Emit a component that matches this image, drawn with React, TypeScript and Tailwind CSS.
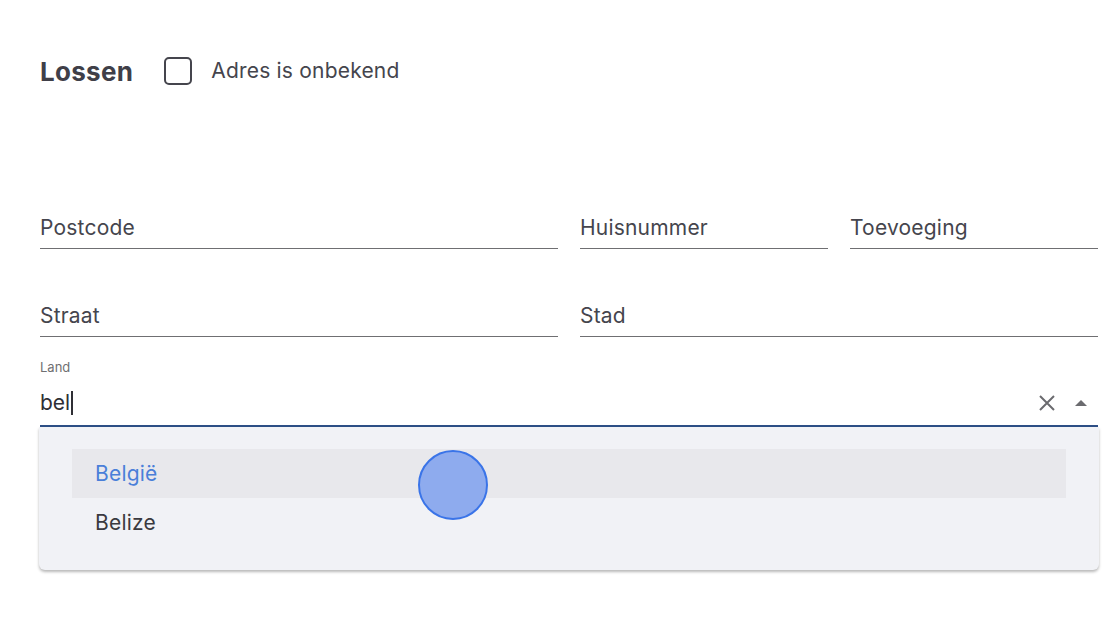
import { useState } from 'react'

type Field = {
  label: string;
  span: string;
};

const rowOne: Field[] = [
  { label: 'Postcode', span: 'col-span-2' },
  { label: 'Huisnummer', span: 'col-span-1' },
  { label: 'Toevoeging', span: 'col-span-1' },
];

const rowTwo: Field[] = [
  { label: 'Straat', span: 'col-span-2' },
  { label: 'Stad', span: 'col-span-2' },
];

const options = ['België', 'Belize'];

const TextField = ({ label, span }: Field) => (
  <div className={`${span} border-b-[1.5px] border-[#6f6f72] pb-[6px]`}>
    <div className="h-[29px] pt-[1px] text-[21px] leading-[28px] tracking-[0.2px] text-[#45454d]">{label}</div>
  </div>
);

const App = () => {
  const [checked, setChecked] = useState(false);
  const [query] = useState('bel');

  return (
    <div
      className="relative h-[623px] w-[1120px] bg-white pl-[40px] pr-[22px] pt-[57px]"
      style={{ fontFamily: 'Inter, "Noto Sans", sans-serif' }}
    >
      <div className="flex h-[28px] items-center">
        <h2 className="text-[26px] font-bold tracking-[0.3px] text-[#3f3f48]">Lossen</h2>
        <button
          onClick={() => setChecked(!checked)}
          className="ml-[31px] h-[28px] w-[28px] rounded-[5px] border-2 border-[#45454d]"
        />
        <span className="ml-[19px] text-[21px] tracking-[0.2px] text-[#45454d]">Adres is onbekend</span>
      </div>

      <div className="mt-[128px] grid grid-cols-4 gap-x-[22px]">
        {rowOne.map((f) => (
          <TextField key={f.label} {...f} />
        ))}
      </div>

      <div className="mt-[52px] grid grid-cols-4 gap-x-[22px]">
        {rowTwo.map((f) => (
          <TextField key={f.label} {...f} />
        ))}
      </div>

      <div className="mt-[22px]">
        <div className="h-[16px] text-[13px] leading-[16px] text-[#6f6f72]">Land</div>
        <div className="mt-[14px] flex items-center border-b-2 border-[#2d4f86] pb-[8px]">
          <div className="flex h-[28px] flex-1 items-center text-[21px] leading-[28px] text-[#2f2f35]">
            {query}
            <span className="ml-[1px] h-[24px] w-[1.5px] bg-[#2f2f35]" />
          </div>
          <svg width="20" height="20" viewBox="0 0 20 20" className="mr-[17px]">
            <path d="M3 3 L17 17 M17 3 L3 17" stroke="#6b6b6f" strokeWidth="2" />
          </svg>
          <svg width="14" height="8" viewBox="0 0 14 8" className="mr-[10px]">
            <path d="M1 7 L7 1 L13 7 Z" fill="#6b6b6f" />
          </svg>
        </div>
        <div className="-ml-[1px] mr-[-1px] rounded-b-[6px] bg-[#f1f2f6] pb-[23px] pl-[33px] pr-[33px] pt-[22px] shadow-[0_2px_3px_rgba(0,0,0,0.28)]">
          {options.map((o, i) => (
            <div
              key={o}
              className={`flex h-[49px] items-center pl-[23px] text-[21px] tracking-[0.2px] ${
                i === 0 ? 'bg-[#e8e8ec] text-[#4a7fd9]' : 'text-[#3a3a40]'
              }`}
            >
              {o}
            </div>
          ))}
        </div>
      </div>

      <div className="absolute left-[418px] top-[450px] h-[70px] w-[70px] rounded-full border-[2.5px] border-[#3a74e8] bg-[#8eabee]" />
    </div>
  );
};

export default App;
